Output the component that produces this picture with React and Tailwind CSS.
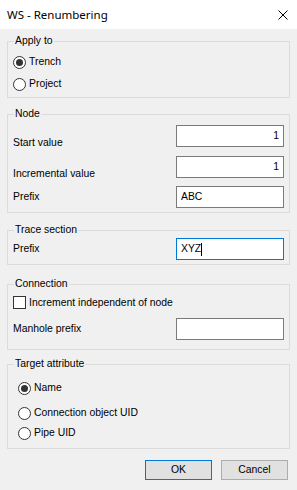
import React from "react";

const font = { fontFamily: '"Liberation Sans", Arial, sans-serif' };
const titleFont = { fontFamily: '"Noto Sans", "Liberation Sans", sans-serif' };

function Radio({ checked, label }) {
  return (
    <div className="flex items-center h-[16px]">
      <span className="w-[13px] h-[13px] rounded-full border border-[#333333] bg-white flex items-center justify-center shrink-0">
        {checked && <span className="w-[7px] h-[7px] rounded-full bg-[#333333]" />}
      </span>
      <span className="ml-[3px] text-[10.4px] leading-[14px] text-black">{label}</span>
    </div>
  );
}

function Group({ title, className = "", children }) {
  return (
    <fieldset className={"border border-[#dcdcdc] mx-[7px] px-[5px] " + className}>
      <legend className="ml-[1px] px-[1px] text-[10.4px] leading-[14px] text-black">{title}</legend>
      {children}
    </fieldset>
  );
}

function TextBox({ value = "", right, focused }) {
  return (
    <div
      className={
        "w-[108px] h-[22px] bg-white border flex items-center px-[4px] text-[10.4px] text-black shrink-0 " +
        (focused ? "border-[#0078d7]" : "border-[#7a7a7a]") +
        (right ? " justify-end" : "")
      }
    >
      <span>{value}</span>
      {focused && <span className="w-px h-[13px] bg-black" />}
    </div>
  );
}

export default function App() {
  return (
    <div className="w-[297px] h-[490px] bg-[#f0f0f0] flex flex-col" style={font}>
      <div className="h-[29px] bg-white flex items-center justify-between pl-[7px] pr-[9px] shrink-0">
        <span className="text-[11.5px] text-black" style={titleFont}>WS - Renumbering</span>
        <svg width="10" height="10" viewBox="0 0 10 10" className="block">
          <path d="M0.5 0.5 L9.5 9.5 M9.5 0.5 L0.5 9.5" stroke="#000" strokeWidth="1" fill="none" />
        </svg>
      </div>

      <Group title="Apply to" className="mt-[5px] pt-[6px] pb-[5px]">
        <div className="flex flex-col gap-[6px]">
          <Radio checked label="Trench" />
          <Radio label="Project" />
        </div>
      </Group>

      <Group title="Node" className="mt-[9px] pt-[4px] pb-[4px]">
        <div className="flex items-start justify-between h-[22px]">
          <span className="mt-[11px] text-[10.4px] leading-[14px]">Start value</span>
          <TextBox value="1" right />
        </div>
        <div className="flex items-start justify-between h-[22px] mt-[9px]">
          <span className="mt-[11px] text-[10.4px] leading-[14px]">Incremental value</span>
          <TextBox value="1" right />
        </div>
        <div className="flex items-center justify-between h-[22px] mt-[8px]">
          <span className="text-[10.4px] leading-[14px]">Prefix</span>
          <TextBox value="ABC" />
        </div>
      </Group>

      <Group title="Trace section" className="mt-[10px] pt-[1px] pb-[4px]">
        <div className="flex items-center justify-between">
          <span className="text-[10.4px] leading-[14px]">Prefix</span>
          <TextBox value="XYZ" focused />
        </div>
      </Group>

      <Group title="Connection" className="mt-[12px] pt-[5px] pb-[9px]">
        <div className="flex items-center h-[13px]">
          <span className="w-[13px] h-[13px] border border-[#333333] bg-white shrink-0" />
          <span className="ml-[3px] text-[10.4px] leading-[14px]">Increment independent of node</span>
        </div>
        <div className="flex items-center justify-between mt-[9px]">
          <span className="text-[10.4px] leading-[14px]">Manhole prefix</span>
          <TextBox />
        </div>
      </Group>

      <Group title="Target attribute" className="mt-[7px] pt-[9px] pb-[7px]">
        <div className="flex flex-col pl-[5px]">
          <Radio checked label="Name" />
          <div className="mt-[9px]"><Radio label="Connection object UID" /></div>
          <div className="mt-[4px]"><Radio label="Pipe UID" /></div>
        </div>
      </Group>

      <div className="flex justify-end gap-[9px] mt-[11px] pr-[9px]">
        <button className="w-[67px] h-[20px] bg-[#e1e1e1] border border-[#0078d7] text-[10.4px] text-black">OK</button>
        <button className="w-[67px] h-[20px] bg-[#e1e1e1] border border-[#adadad] text-[10.4px] text-black">Cancel</button>
      </div>
    </div>
  );
}
